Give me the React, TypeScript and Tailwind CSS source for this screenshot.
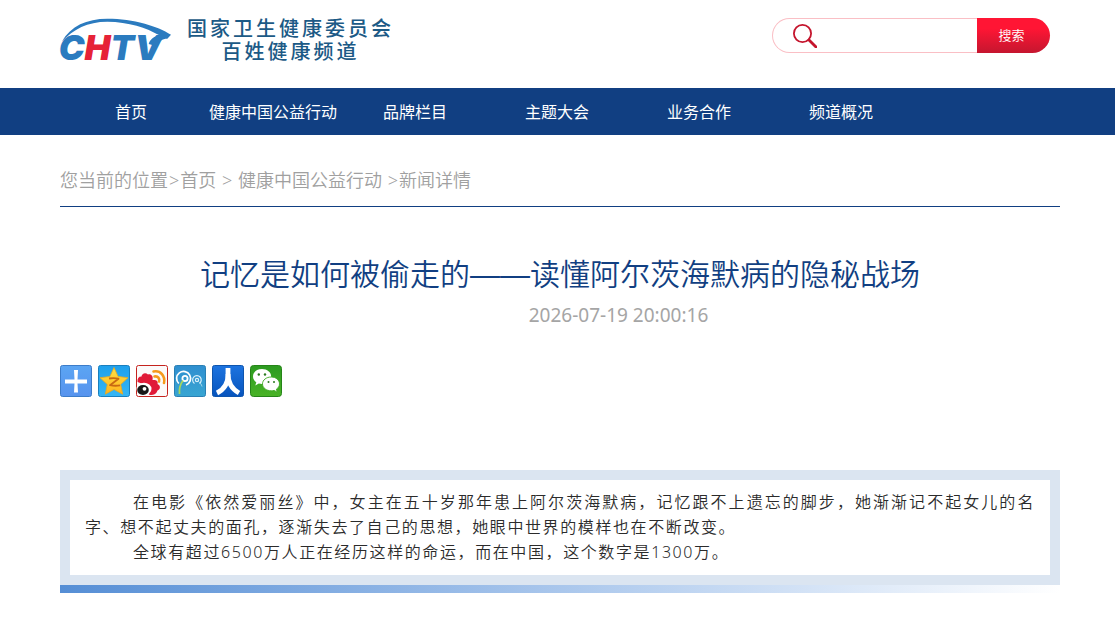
import type { ReactNode } from 'react';

const NAV_ITEMS = ['首页', '健康中国公益行动', '品牌栏目', '主题大会', '业务合作', '频道概况'];

function Logo() {
	return (
		<svg className="w-28 h-11 overflow-visible" viewBox="30 22 336 132" role="img" aria-label="CHTV">
			<text x="26" y="149" className="font-['Inter',sans-serif] font-black italic" fontSize="104" fill="#2b7bbf">
				C<tspan fill="#e62337">H</tspan>TV
			</text>
			<path d="M36 92C62 46 110 24 172 24C252 24 322 46 363 72L352 84C336 84 328 92 318 106L296 100C300 86 312 77 328 74C290 51 236 34 172 33C112 33 70 56 36 92Z" fill="#2b7bbf" />
		</svg>
	);
}

function Search() {
	return (
		<form className="flex w-[278px] h-[35px] mr-[10px]" onSubmit={(e) => e.preventDefault()}>
			<label htmlFor="keyword" className="flex items-center w-[52px] pl-5 rounded-l-full border border-r-0 border-[#fabfc5]">
				<svg className="w-6 h-6" viewBox="0 0 24 24" fill="none" stroke="#c5152d">
					<circle cx="9.5" cy="9.5" r="8.6" strokeWidth="1.8" />
					<path d="M16 16L23 23" strokeWidth="2.8" strokeLinecap="round" />
				</svg>
			</label>
			<input id="keyword" type="text" aria-label="搜索" className="flex-1 min-w-0 border-y border-[#fabfc5] text-sm outline-none" />
			<button type="submit" className="w-[73px] pr-1 rounded-r-full bg-linear-to-b from-[#ff1534] from-30% to-[#c5162f] text-[13px] font-[350] text-white">
				搜索
			</button>
		</form>
	);
}

function ShareIcon({ label, children }: { label: string; children: ReactNode }) {
	return (
		<a href="#" aria-label={label} className="block w-8 h-8">
			<svg className="w-8 h-8" viewBox="0 0 32 32">
				{children}
			</svg>
		</a>
	);
}

function ShareBar() {
	return (
		<div className="flex gap-[6px] mt-[30px]">
			<svg className="absolute w-0 h-0" aria-hidden="true">
				<defs>
					<linearGradient id="plus" x1="0" y1="0" x2="0" y2="1">
						<stop offset="0" stopColor="#5ba5f3" />
						<stop offset="1" stopColor="#5793ee" />
					</linearGradient>
					<linearGradient id="sky" x1="0" y1="0" x2="0" y2="1">
						<stop offset="0" stopColor="#1fa0ec" />
						<stop offset="1" stopColor="#35b6f5" />
					</linearGradient>
					<linearGradient id="star" x1="0" y1="0" x2="0" y2="1">
						<stop offset="0" stopColor="#ffe345" />
						<stop offset="1" stopColor="#ffb21c" />
					</linearGradient>
					<linearGradient id="teal" x1="0" y1="0" x2="0" y2="1">
						<stop offset="0" stopColor="#2f8fd0" />
						<stop offset="1" stopColor="#38a5d2" />
					</linearGradient>
					<linearGradient id="renren" x1="0" y1="0" x2="0" y2="1">
						<stop offset="0" stopColor="#1d74e0" />
						<stop offset="1" stopColor="#0754bd" />
					</linearGradient>
					<linearGradient id="wechat" x1="0" y1="0" x2="0" y2="1">
						<stop offset="0" stopColor="#2c9a20" />
						<stop offset="1" stopColor="#49b326" />
					</linearGradient>
				</defs>
			</svg>
			<ShareIcon label="更多">
				<rect x=".5" y=".5" width="31" height="31" rx="2" fill="url(#plus)" stroke="#3c7cc9" />
				<path d="M14 5h4l-.5 9.500H27v4h-9.500l.5 9h-4l.5-9H5v-4h9.500z" fill="#fff" />
			</ShareIcon>
			<ShareIcon label="QQ空间">
				<rect x=".5" y=".5" width="31" height="31" rx="2" fill="url(#sky)" stroke="#1a7fbe" />
				<path d="M16 2.500l4.100 9 9.900 1.200-7.300 6.800 2 9.700L16 24.400l-8.700 4.800 2-9.700L2 12.700l9.900-1.200z" fill="url(#star)" stroke="#e8a820" strokeWidth=".8" strokeLinejoin="round" />
				<path d="M11 13.500q5-1 9.500.2l-8.500 6.500q5 1 10 .2" fill="none" stroke="#c96a12" strokeWidth="1.800" strokeLinejoin="round" />
			</ShareIcon>
			<ShareIcon label="新浪微博">
				<rect x=".5" y=".5" width="31" height="31" rx="2" fill="#fbfafa" stroke="#c5231e" />
				<path d="M1.500 17c-.3-3.500 1-5.500 4-5.500 .2-3 4-4.500 6.500-2 3-.8 5.500 1.500 4.500 5.500 3.500-.5 6 1 5 4 3.500 1.500 3 5.500 0 6.500-1 4-6 5.500-8.500 4L7 19z" fill="#e01a38" />
				<ellipse cx="8" cy="24" rx="7.500" ry="6.300" fill="#fff" />
				<ellipse cx="7" cy="25" rx="5.800" ry="5" fill="#171717" />
				<circle cx="8.500" cy="23.800" r="1.900" fill="#fff" />
				<path d="M17.500 6.500c7-1.500 12 4.500 10.500 11.500M18.500 11.500c3.500-.7 5.500 1.800 4.500 5" fill="none" stroke="#f59a1c" strokeWidth="2.600" strokeLinecap="round" />
			</ShareIcon>
			<ShareIcon label="腾讯微博">
				<rect x=".5" y=".5" width="31" height="31" rx="2" fill="url(#teal)" stroke="#2a80b4" />
				<path d="M4.800 18.500A7 7 0 1 1 12 20" fill="none" stroke="#fff" strokeWidth="1.700" />
				<circle cx="11" cy="13.500" r="2.600" fill="none" stroke="#fff" strokeWidth="1.800" />
				<path d="M9 15.500C6 19.500 5 24 5.500 29" fill="none" stroke="#a8d65c" strokeWidth="1.700" />
				<path d="M20.500 18.500a4.300 4.300 0 1 1 5-.1" fill="none" stroke="#d8f0fb" strokeWidth="1.200" />
				<circle cx="23" cy="15" r="1.600" fill="none" stroke="#d8f0fb" strokeWidth="1.200" />
				<path d="M24.500 16.500c2 1.800 3 3 3.500 5" fill="none" stroke="#a8dceb" />
			</ShareIcon>
			<ShareIcon label="人人网">
				<rect x=".5" y=".5" width="31" height="31" rx="2" fill="url(#renren)" stroke="#0e55ae" />
				<path d="M16 3v7c0 9-4 14.500-11 18" fill="none" stroke="#fff" strokeWidth="4.800" />
				<path d="M16 9c0 9 4 15 11 19" fill="none" stroke="#fff" strokeWidth="4.800" />
			</ShareIcon>
			<ShareIcon label="微信">
				<rect x=".5" y=".5" width="31" height="31" rx="3" fill="url(#wechat)" stroke="#268518" />
				<path d="M12 4C6.500 4 3 7.500 3 11.500c0 2.400 1.300 4.400 3.300 5.800l-1 3.200 3.500-1.900c1 .3 2.100.4 3.200.4 5.200 0 9.200-3.300 9.200-7.500S17.200 4 12 4z" fill="#fff" />
				<path d="M21.300 12c-5 0-8.800 3-8.800 6.900s3.800 6.900 8.800 6.900c1 0 1.900-.1 2.800-.4l3.200 1.800-.9-3c1.900-1.200 3.100-3.100 3.100-5.300 0-3.800-3.500-6.900-8.200-6.900z" fill="#fff" stroke="#3da823" strokeWidth=".9" />
				<g fill="#2c7a20">
					<circle cx="8.800" cy="9.500" r="1.200" />
					<circle cx="15" cy="9.500" r="1.200" />
					<circle cx="18.500" cy="17" r="1" />
					<circle cx="24" cy="17" r="1" />
				</g>
			</ShareIcon>
		</div>
	);
}

export default function App() {
	return (
		<div lang="zh-CN" className="overflow-x-clip bg-white font-['Noto_Sans','Noto_Sans_CJK_SC',sans-serif]">
			<div className="min-w-[1120px]">
				<header className="flex justify-between items-start w-[1000px] h-[88px] mx-auto pt-[18px]">
					<a href="#" className="flex items-start gap-[15px]">
						<Logo />
						<span className="-mt-px text-center text-xl leading-[23px] font-medium tracking-[3px] text-[#1c5a86]">
							国家卫生健康委员会
							<br />
							百姓健康频道
						</span>
					</a>
					<Search />
				</header>

				<nav className="bg-[#113f82]">
					<ul className="flex w-[1000px] mx-auto">
						{NAV_ITEMS.map((item) => (
							<li key={item} className="w-[142px] pt-[2px] text-center text-base leading-[45px] text-white whitespace-nowrap">
								<a href="#">{item}</a>
							</li>
						))}
					</ul>
				</nav>

				<main className="w-[1000px] mx-auto">
					<div className="pt-[27px] pb-2 border-b border-[#113f82] text-lg leading-9 font-[350] text-[#a0a0a0]">
						您当前的位置<span className="mx-px">&gt;</span>
						<a href="#">首页</a> <span className="mx-px">&gt;</span> <a href="#">健康中国公益行动</a> <span className="mx-px">&gt;</span>
						新闻详情
					</div>

					<h1 className="mt-12 text-center text-3xl leading-10 font-[350] text-[#113f82] font-['Liberation_Sans','Noto_Sans_CJK_SC',sans-serif]">
						记忆是如何被偷走的——读懂阿尔茨海默病的隐秘战场
					</h1>
					<p className="pl-[117px] text-center text-[19px] leading-10 text-[#a5a5a5]">2026-07-19 20:00:16</p>

					<ShareBar />

					<section className="mt-[73px]">
						<div className="border-10 border-[#dbe5f1] px-[15px] py-[10px] text-base leading-[25px] font-[350] tracking-widest text-justify text-[#2b2b2b]">
							<p className="indent-12">
								在电影《依然爱丽丝》中，女主在五十岁那年患上阿尔茨海默病，记忆跟不上遗忘的脚步，她渐渐记不起女儿的名字、想不起丈夫的面孔，逐渐失去了自己的思想，她眼中世界的模样也在不断改变。
							</p>
							<p className="indent-12">全球有超过6500万人正在经历这样的命运，而在中国，这个数字是1300万。</p>
						</div>
						<div className="h-2 bg-linear-to-r from-[#558ed5] to-white" />
					</section>
				</main>
			</div>
		</div>
	);
}
